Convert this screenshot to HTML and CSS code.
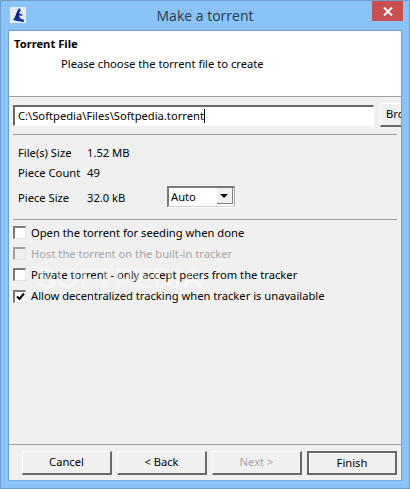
FILE: index.html
```html
<!DOCTYPE html>
<html>

<head>
    <title>Make a torrent</title>
    <link rel="stylesheet" href="styles.css">
</head>

<body>
    <div class="window">
        <div class="titlebar">
            <svg class="app-icon" width="16" height="16" viewBox="0 0 16 16">
                <rect width="16" height="16" fill="#e4ecf6" />
                <path d="M9 1 L11 3 L9 6 L13 8 L11 9 L9 8 L10 11 L14 13 L14 15 L7 14 L3 13 L5 10 L7 5 Z" fill="#12349a" />
                <path d="M8 3 L9 6 L7 11 L5 11 Z" fill="#0a1f6b" />
            </svg>
            <div class="title">Make a torrent</div>
            <div class="close">
                <svg width="10" height="9" viewBox="0 0 10 9">
                    <path d="M1 0.5 L9 8.5 M9 0.5 L1 8.5" stroke="#fff" stroke-width="2" />
                </svg>
            </div>
        </div>
        <div class="content">
            <div class="header">
                <div class="header-title">Torrent File</div>
                <div class="header-sub">Please choose the torrent file to create</div>
            </div>
            <div class="page">
                <div class="file-row">
                    <div class="input">C:\Softpedia\Files\Softpedia.torrent<span class="caret"></span></div>
                    <div class="btn browse">Bro</div>
                </div>
                <div class="sep"></div>
                <div class="info">
                    <div class="info-row"><span class="label">File(s) Size</span><span>1.52 MB</span></div>
                    <div class="info-row"><span class="label">Piece Count</span><span>49</span></div>
                    <div class="info-row piece">
                        <span class="label">Piece Size</span><span class="value">32.0 kB</span>
                        <div class="combo">
                            <span class="combo-text">Auto</span>
                            <span class="combo-arrow"></span>
                        </div>
                    </div>
                </div>
                <div class="sep"></div>
                <div class="checks">
                    <div class="check"><span class="box"></span>Open the torrent for seeding when done</div>
                    <div class="check disabled"><span class="box"></span>Host the torrent on the built-in tracker</div>
                    <div class="check"><span class="box"></span>Private torrent - only accept peers from the tracker</div>
                    <div class="check">
                        <span class="box">
                            <svg width="9" height="9" viewBox="0 0 9 9">
                                <path d="M1 4.5 L3.5 7 L8 1.5" fill="none" stroke="#000" stroke-width="2" />
                            </svg>
                        </span>Allow decentralized tracking when tracker is unavailable
                    </div>
                </div>
                <div class="watermark">SOFTPEDIA</div>
            </div>
            <div class="footer">
                <div class="btn">Cancel</div>
                <div class="btn">&lt; Back</div>
                <div class="btn off">Next &gt;</div>
                <div class="btn default">Finish</div>
            </div>
        </div>
    </div>
</body>

</html>
```

FILE: styles.css
```css
html,
body {
    height: 100%;
    padding: 0;
    margin: 0;
}

body {
    font-family: "Noto Sans", "Liberation Sans", sans-serif;
    font-size: 11.2px;
    color: #000;
}

.window {
    box-sizing: border-box;
    width: 410px;
    height: 489px;
    background: #8ac3f8;
    border: 1px solid #6e9fd0;
    display: flex;
    flex-direction: column;
    padding: 0 7px 7px 7px;
}

.titlebar {
    height: 29px;
    flex-shrink: 0;
    display: flex;
    align-items: flex-start;
    position: relative;
}

.app-icon {
    margin: 6px 0 0 2px;
}

.title {
    position: absolute;
    left: 0;
    right: 0;
    top: 4px;
    text-align: center;
    font-family: "Open Sans", sans-serif;
    font-size: 14px;
    line-height: 22px;
    color: #2b3947;
}

.close {
    margin-left: auto;
    margin-right: -1px;
    width: 31px;
    height: 20px;
    background: #c75050;
    display: flex;
    align-items: center;
    justify-content: center;
    position: relative;
}

.content {
    flex: 1;
    display: flex;
    flex-direction: column;
    background: #f0f0f0;
    border: 1px solid #6e9fd0;
    border-bottom-color: #7fb2e2;
}

.header {
    height: 66px;
    flex-shrink: 0;
    box-sizing: border-box;
    background: #fff;
    border-bottom: 1px solid #a0a0a0;
    padding: 5px 5px;
}

.header-title {
    font-weight: bold;
    line-height: 16px;
}

.header-sub {
    margin: 4px 0 0 47px;
    line-height: 16px;
}

.page {
    flex: 1;
    padding: 8px 4px 0 4px;
    position: relative;
    overflow: hidden;
}

.file-row {
    display: flex;
    gap: 6px;
    margin-right: -8px;
}

.input {
    box-sizing: border-box;
    width: 361px;
    height: 21px;
    background: #fff;
    border: 1px solid #fff;
    border-top: 2px solid #696969;
    border-left: 2px solid #696969;
    padding-left: 3px;
    line-height: 17px;
    white-space: nowrap;
    overflow: hidden;
}

.caret {
    display: inline-block;
    width: 1px;
    height: 14px;
    background: #000;
    vertical-align: -3px;
}

.btn {
    box-sizing: border-box;
    width: 90px;
    height: 24px;
    background: #f0f0f0;
    border: 1px solid #fff;
    border-right: 2px solid #696969;
    border-bottom: 2px solid #696969;
    text-align: center;
    line-height: 20px;
}

.browse {
    flex: 1;
    width: auto;
    margin-top: -2px;
    text-align: left;
    padding-left: 5px;
    border-right: 0;
}

.off {
    color: #a6a6a6;
}

.default {
    border: 2px solid #696969;
    box-shadow: inset 1px 1px 0 #fff;
    line-height: 19px;
}

.sep {
    height: 1px;
    background: #a0a0a0;
    margin-top: 7px;
    margin-right: 0;
}

.info {
    padding: 10px 0 0 5px;
    height: 77px;
    box-sizing: border-box;
}

.info-row {
    display: flex;
    height: 20px;
    line-height: 16px;
}

.label {
    width: 69px;
}

.piece {
    margin-top: 5px;
    align-items: flex-start;
}

.value {
    width: 80px;
}

.combo {
    box-sizing: border-box;
    width: 68px;
    height: 21px;
    margin-top: -4px;
    background: #fff;
    border: 2px solid #7a7a7a;
    border-right: 1px solid #a0a0a0;
    border-bottom: 1px solid #d0d0d0;
    box-shadow: 1px 1px 0 #fff;
    display: flex;
    justify-content: space-between;
    line-height: 18px;
    padding-left: 2px;
}

.combo-arrow {
    width: 16px;
    height: 16px;
    margin: 0 1px;
    background: #f0f0f0;
    border-right: 1px solid #808080;
    border-bottom: 1px solid #808080;
    box-sizing: border-box;
    position: relative;
}

.combo-arrow::after {
    content: "";
    position: absolute;
    left: 3px;
    top: 6px;
    border: 4px solid transparent;
    border-top-color: #000;
    border-bottom: 0;
}

.checks {
    padding-top: 2px;
}

.check {
    display: flex;
    align-items: center;
    height: 21.2px;
    line-height: 16px;
}

.box {
    box-sizing: border-box;
    width: 13px;
    height: 13px;
    margin-right: 5px;
    background: #fff;
    border: 2px solid #7a7a7a;
    border-right: 1px solid #e3e3e3;
    border-bottom: 1px solid #e3e3e3;
    display: flex;
    align-items: center;
    justify-content: center;
}

.disabled {
    color: #a6a6a6;
}

.disabled .box {
    background: #f0f0f0;
    border-top-color: #a0a0a0;
    border-left-color: #a0a0a0;
}

/* faint stamp over the options */
.watermark {
    position: absolute;
    left: 28px;
    top: 165px;
    font-family: "Liberation Sans", sans-serif;
    font-weight: bold;
    font-size: 29px;
    color: rgba(255, 255, 255, 0.4);
}

.footer {
    height: 36px;
    flex-shrink: 0;
    box-sizing: border-box;
    border-top: 1px solid #a0a0a0;
    padding: 6px 4px 0 13px;
    display: flex;
    gap: 5px;
}
```
